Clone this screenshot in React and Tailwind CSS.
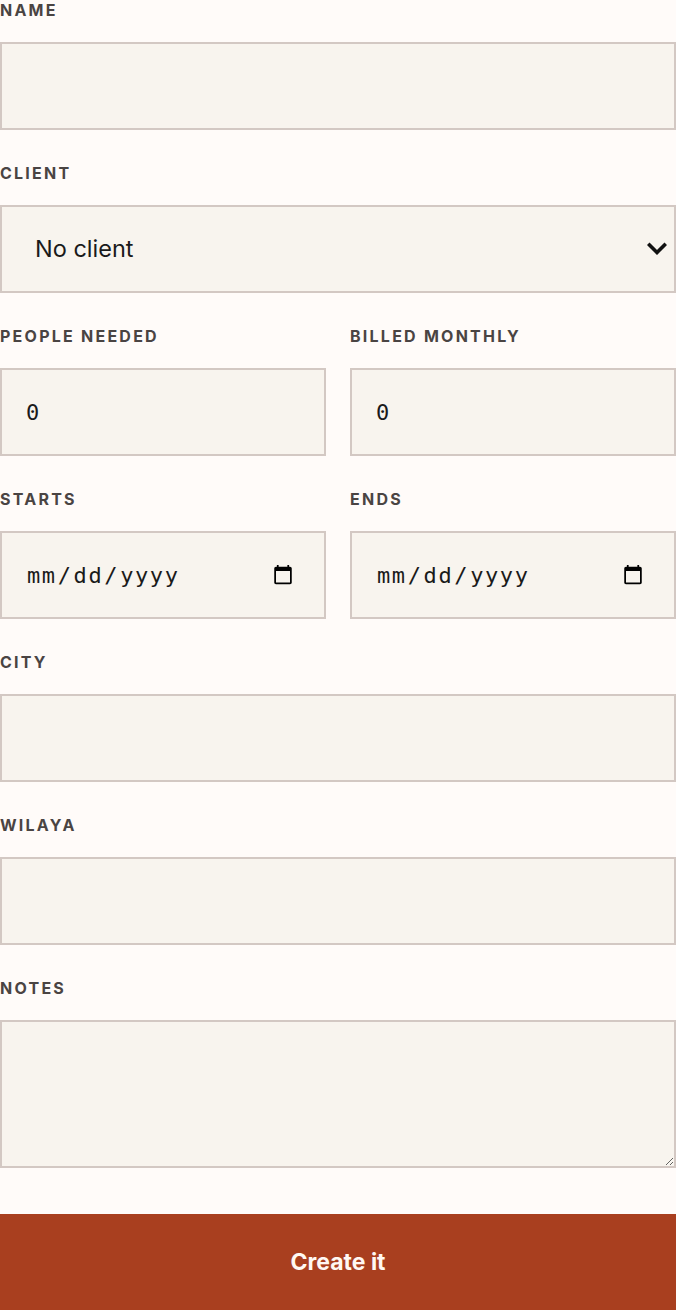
import React, { useState } from "react";

const labelCls =
  "block h-5 text-[16px] leading-5 font-bold uppercase tracking-[0.14em] text-[#4a4443]";
const boxCls =
  "w-full h-[88px] border-2 border-[#d3c8c3] bg-[#f8f4ee] px-6 text-[#1a1a1a] outline-none rounded-none";
const monoCls = "font-['DejaVu_Sans_Mono',monospace] text-[22px]";

const Field = ({ label, children }) => (
  <div className="flex flex-col gap-[22px]">
    <label className={labelCls}>{label}</label>
    {children}
  </div>
);

const App = () => {
  const [form, setForm] = useState({
    name: "",
    client: "",
    people: 0,
    billed: 0,
    starts: "",
    ends: "",
    city: "",
    wilaya: "",
    notes: "",
  });

  const set = (key) => (e) => setForm({ ...form, [key]: e.target.value });

  return (
    <div className="min-h-screen bg-[#fffbf9] font-['Inter',sans-serif]">
      <form
        className="flex flex-col gap-[33px]"
        onSubmit={(e) => e.preventDefault()}
      >
        <Field label="Name">
          <input type="text" value={form.name} onChange={set("name")} className={boxCls} />
        </Field>

        <Field label="Client">
          <div className="relative">
            <select
              value={form.client}
              onChange={set("client")}
              className={`${boxCls} appearance-none pl-[33px] text-[23.5px]`}
            >
              <option value="">No client</option>
            </select>
            {/* custom chevron over the select */}
            <svg
              viewBox="0 0 20 14"
              className="pointer-events-none absolute right-[9px] top-1/2 -translate-y-1/2 w-5 h-[14px]"
            >
              <path
                d="M2.5 3 L10 10.5 L17.5 3"
                fill="none"
                stroke="#111"
                strokeWidth="3.6"
                strokeLinecap="square"
              />
            </svg>
          </div>
        </Field>

        <div className="grid grid-cols-2 gap-6">
          <Field label="People needed">
            <input type="number" value={form.people} onChange={set("people")} className={`${boxCls} ${monoCls}`} />
          </Field>
          <Field label="Billed monthly">
            <input type="number" value={form.billed} onChange={set("billed")} className={`${boxCls} ${monoCls}`} />
          </Field>
        </div>

        <div className="grid grid-cols-2 gap-6">
          <Field label="Starts">
            <input type="date" value={form.starts} onChange={set("starts")} className={`${boxCls} ${monoCls} pr-7 tracking-[1.6px]`} />
          </Field>
          <Field label="Ends">
            <input type="date" value={form.ends} onChange={set("ends")} className={`${boxCls} ${monoCls} pr-7 tracking-[1.6px]`} />
          </Field>
        </div>

        <Field label="City">
          <input type="text" value={form.city} onChange={set("city")} className={boxCls} />
        </Field>

        <Field label="Wilaya">
          <input type="text" value={form.wilaya} onChange={set("wilaya")} className={boxCls} />
        </Field>

        <Field label="Notes">
          <textarea
            value={form.notes}
            onChange={set("notes")}
            className="w-full h-[148px] border-2 border-[#d3c8c3] bg-[#f8f4ee] px-6 py-4 text-[#1a1a1a] outline-none rounded-none block"
          />
        </Field>

        <button
          type="submit"
          className="mt-[13px] h-[96px] w-full bg-[#a93f1f] text-[23px] font-bold text-[#fff8f3]"
        >
          Create it
        </button>
      </form>
    </div>
  );
};

export default App;
